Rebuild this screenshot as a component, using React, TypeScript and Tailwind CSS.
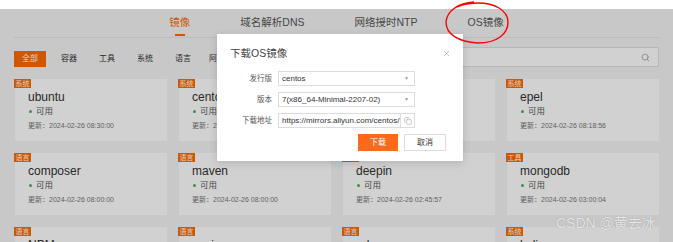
import React from "react";
import { Search, Copy, X } from "lucide-react";

type Mirror = { name: string; tag: string; time: string };

const mirrors: Mirror[] = [
  { name: "ubuntu", tag: "系统", time: "2024-02-26 08:30:00" },
  { name: "centos", tag: "系统", time: "2024-02-26 08:20:00" },
  { name: "debian", tag: "系统", time: "2024-02-26 08:10:00" },
  { name: "epel", tag: "系统", time: "2024-02-26 08:18:56" },
  { name: "composer", tag: "语言", time: "2024-02-26 08:00:00" },
  { name: "maven", tag: "语言", time: "2024-02-26 08:00:00" },
  { name: "deepin", tag: "系统", time: "2024-02-26 02:45:57" },
  { name: "mongodb", tag: "工具", time: "2024-02-26 03:00:04" },
  { name: "NPM", tag: "语言", time: "2024-02-26 08:00:00" },
  { name: "pypi", tag: "语言", time: "2024-02-26 08:00:00" },
  { name: "rubygems", tag: "语言", time: "2024-02-26 08:00:00" },
  { name: "kali", tag: "系统", time: "2024-02-26 08:00:00" },
];

const tabs = ["镜像", "域名解析DNS", "网络授时NTP", "OS镜像"];
const filters = ["容器", "工具", "系统", "语言", "阿里云"];

const font = "font-['Liberation_Sans','Noto_Sans_CJK_SC',sans-serif]";

const MirrorCard = ({ m }: { m: Mirror }) => (
  <div className="relative h-[62px] bg-white pl-[13px] pt-[11px]">
    <span className="absolute -left-px top-0 h-[9px] w-[17px] bg-[#ff6a00] text-center text-[7px] leading-[9px] text-white">
      {m.tag}
    </span>
    <div className="text-[12px] leading-[14px] text-[#333]">{m.name}</div>
    <div className="mt-[2px] flex items-center gap-[4px] pl-px text-[8.5px] leading-[10px] text-[#555]">
      <span className="h-[3px] w-[3px] rounded-full bg-[#4caf50]" />
      可用
    </div>
    <div className="mt-[5px] text-[7px] leading-[10px] text-[#777]">
      更新：{m.time}
    </div>
  </div>
);

const Field = ({
  label,
  children,
}: {
  label: string;
  children: React.ReactNode;
}) => (
  <div className="flex items-center">
    <div className="w-[61px] pr-[6px] text-right text-[7.5px] text-[#555]">
      {label}
    </div>
    <div className="flex h-[15px] w-[137px] items-center overflow-hidden border border-[#dcdcdc] bg-white text-[8px] text-[#333]">
      {children}
    </div>
  </div>
);

export default function App() {
  return (
    <div className={`relative h-[242px] w-[673px] overflow-hidden bg-white ${font}`}>
      <div className="h-[9px]" />
      <div className="relative h-[233px] bg-[#f5f5f5]">
        {/* tabs */}
        <div className="mx-[14px] flex h-[29px] items-center justify-center gap-[50px] border-b border-[#e6e6e6]">
          {tabs.map((t, i) => (
            <div
              key={t}
              className={`relative flex h-full items-center text-[10.5px] ${
                i === 0 ? "text-[#ff6a00]" : "text-[#555]"
              }`}
            >
              {t}
              {i === 0 && (
                <span className="absolute bottom-[1px] left-1/2 h-[2px] w-[10px] -translate-x-1/2 bg-[#ff6a00]" />
              )}
            </div>
          ))}
        </div>

        {/* filters */}
        <div className="mx-[14px] mt-[9px] flex items-end">
          <div className="flex h-[16px] w-[32px] items-center justify-center bg-[#ff6a00] text-[8px] text-white">
            全部
          </div>
          <div className="ml-[4px] flex h-[16px] items-center">
            {filters.map((f) => (
              <div key={f} className="w-[38px] text-center text-[8px] text-[#333]">
                {f}
              </div>
            ))}
          </div>
          <div className="ml-auto flex h-[20px] w-[210px] items-center justify-end border border-[#e0e0e0] bg-white pr-[8px]">
            <Search className="h-[9px] w-[9px] text-[#999]" strokeWidth={2} />
          </div>
        </div>

        {/* cards */}
        <div className="ml-[15px] mr-[14px] mt-[12px] grid grid-cols-4 gap-x-[12px] gap-y-[12px]">
          {mirrors.map((m) => (
            <MirrorCard key={m.name} m={m} />
          ))}
        </div>

        {/* mask */}
        <div className="absolute inset-0 bg-black/[0.18]" />
      </div>

      {/* dialog */}
      <div className="absolute left-[217px] top-[34px] h-[127px] w-[246px] bg-white shadow-[0_2px_8px_rgba(0,0,0,0.15)]">
        <div className="flex items-center justify-between pl-[13px] pr-[12px] pt-[12px] text-[10.5px] leading-[14px] text-[#444]">
          下载OS镜像
          <X className="h-[9px] w-[9px] text-[#999]" strokeWidth={1.5} />
        </div>
        <div className="mt-[11px] flex flex-col gap-[6px]">
          <Field label="发行版">
            <span className="min-w-0 flex-1 pl-[3px]">centos</span>
            <span className="mr-[5px] text-[5px] text-[#999]">▼</span>
          </Field>
          <Field label="版本">
            <span className="min-w-0 flex-1 pl-[3px]">7(x86_64-Minimal-2207-02)</span>
            <span className="mr-[5px] text-[5px] text-[#999]">▼</span>
          </Field>
          <Field label="下载地址">
            <span className="min-w-0 flex-1 overflow-hidden whitespace-nowrap pl-[3px]">
              https://mirrors.aliyun.com/centos/7
            </span>
            <span className="flex h-full w-[14px] shrink-0 items-center justify-center border-l border-[#dcdcdc]">
              <Copy className="h-[8px] w-[8px] text-[#999]" strokeWidth={1.5} />
            </span>
          </Field>
        </div>
        <div className="mr-[17px] mt-[6px] flex justify-end gap-[6px]">
          <div className="flex h-[17px] w-[40px] items-center justify-center bg-[#ff6a1a] text-[8px] text-white">
            下载
          </div>
          <div className="flex h-[17px] w-[42px] items-center justify-center border border-[#dcdcdc] text-[8px] text-[#333]">
            取消
          </div>
        </div>
      </div>

      {/* red mark */}
      <svg className="absolute left-0 top-0" width="673" height="60" fill="none">
        <path
          d="M474 2 C458 3 447 11 446 22 C446 34 458 42 478 43 C497 43 508 34 508 22 C508 10 494 3 478 3 C468 3 458 5 452 10"
          stroke="#ff0000"
          strokeWidth="1.4"
        />
      </svg>

      {/* watermark */}
      <div className="absolute left-[556px] top-[213px] text-[14px] text-white/75 [text-shadow:0_0_1px_rgba(0,0,0,0.3)]">
        CSDN @黄去冰
      </div>
    </div>
  );
}
